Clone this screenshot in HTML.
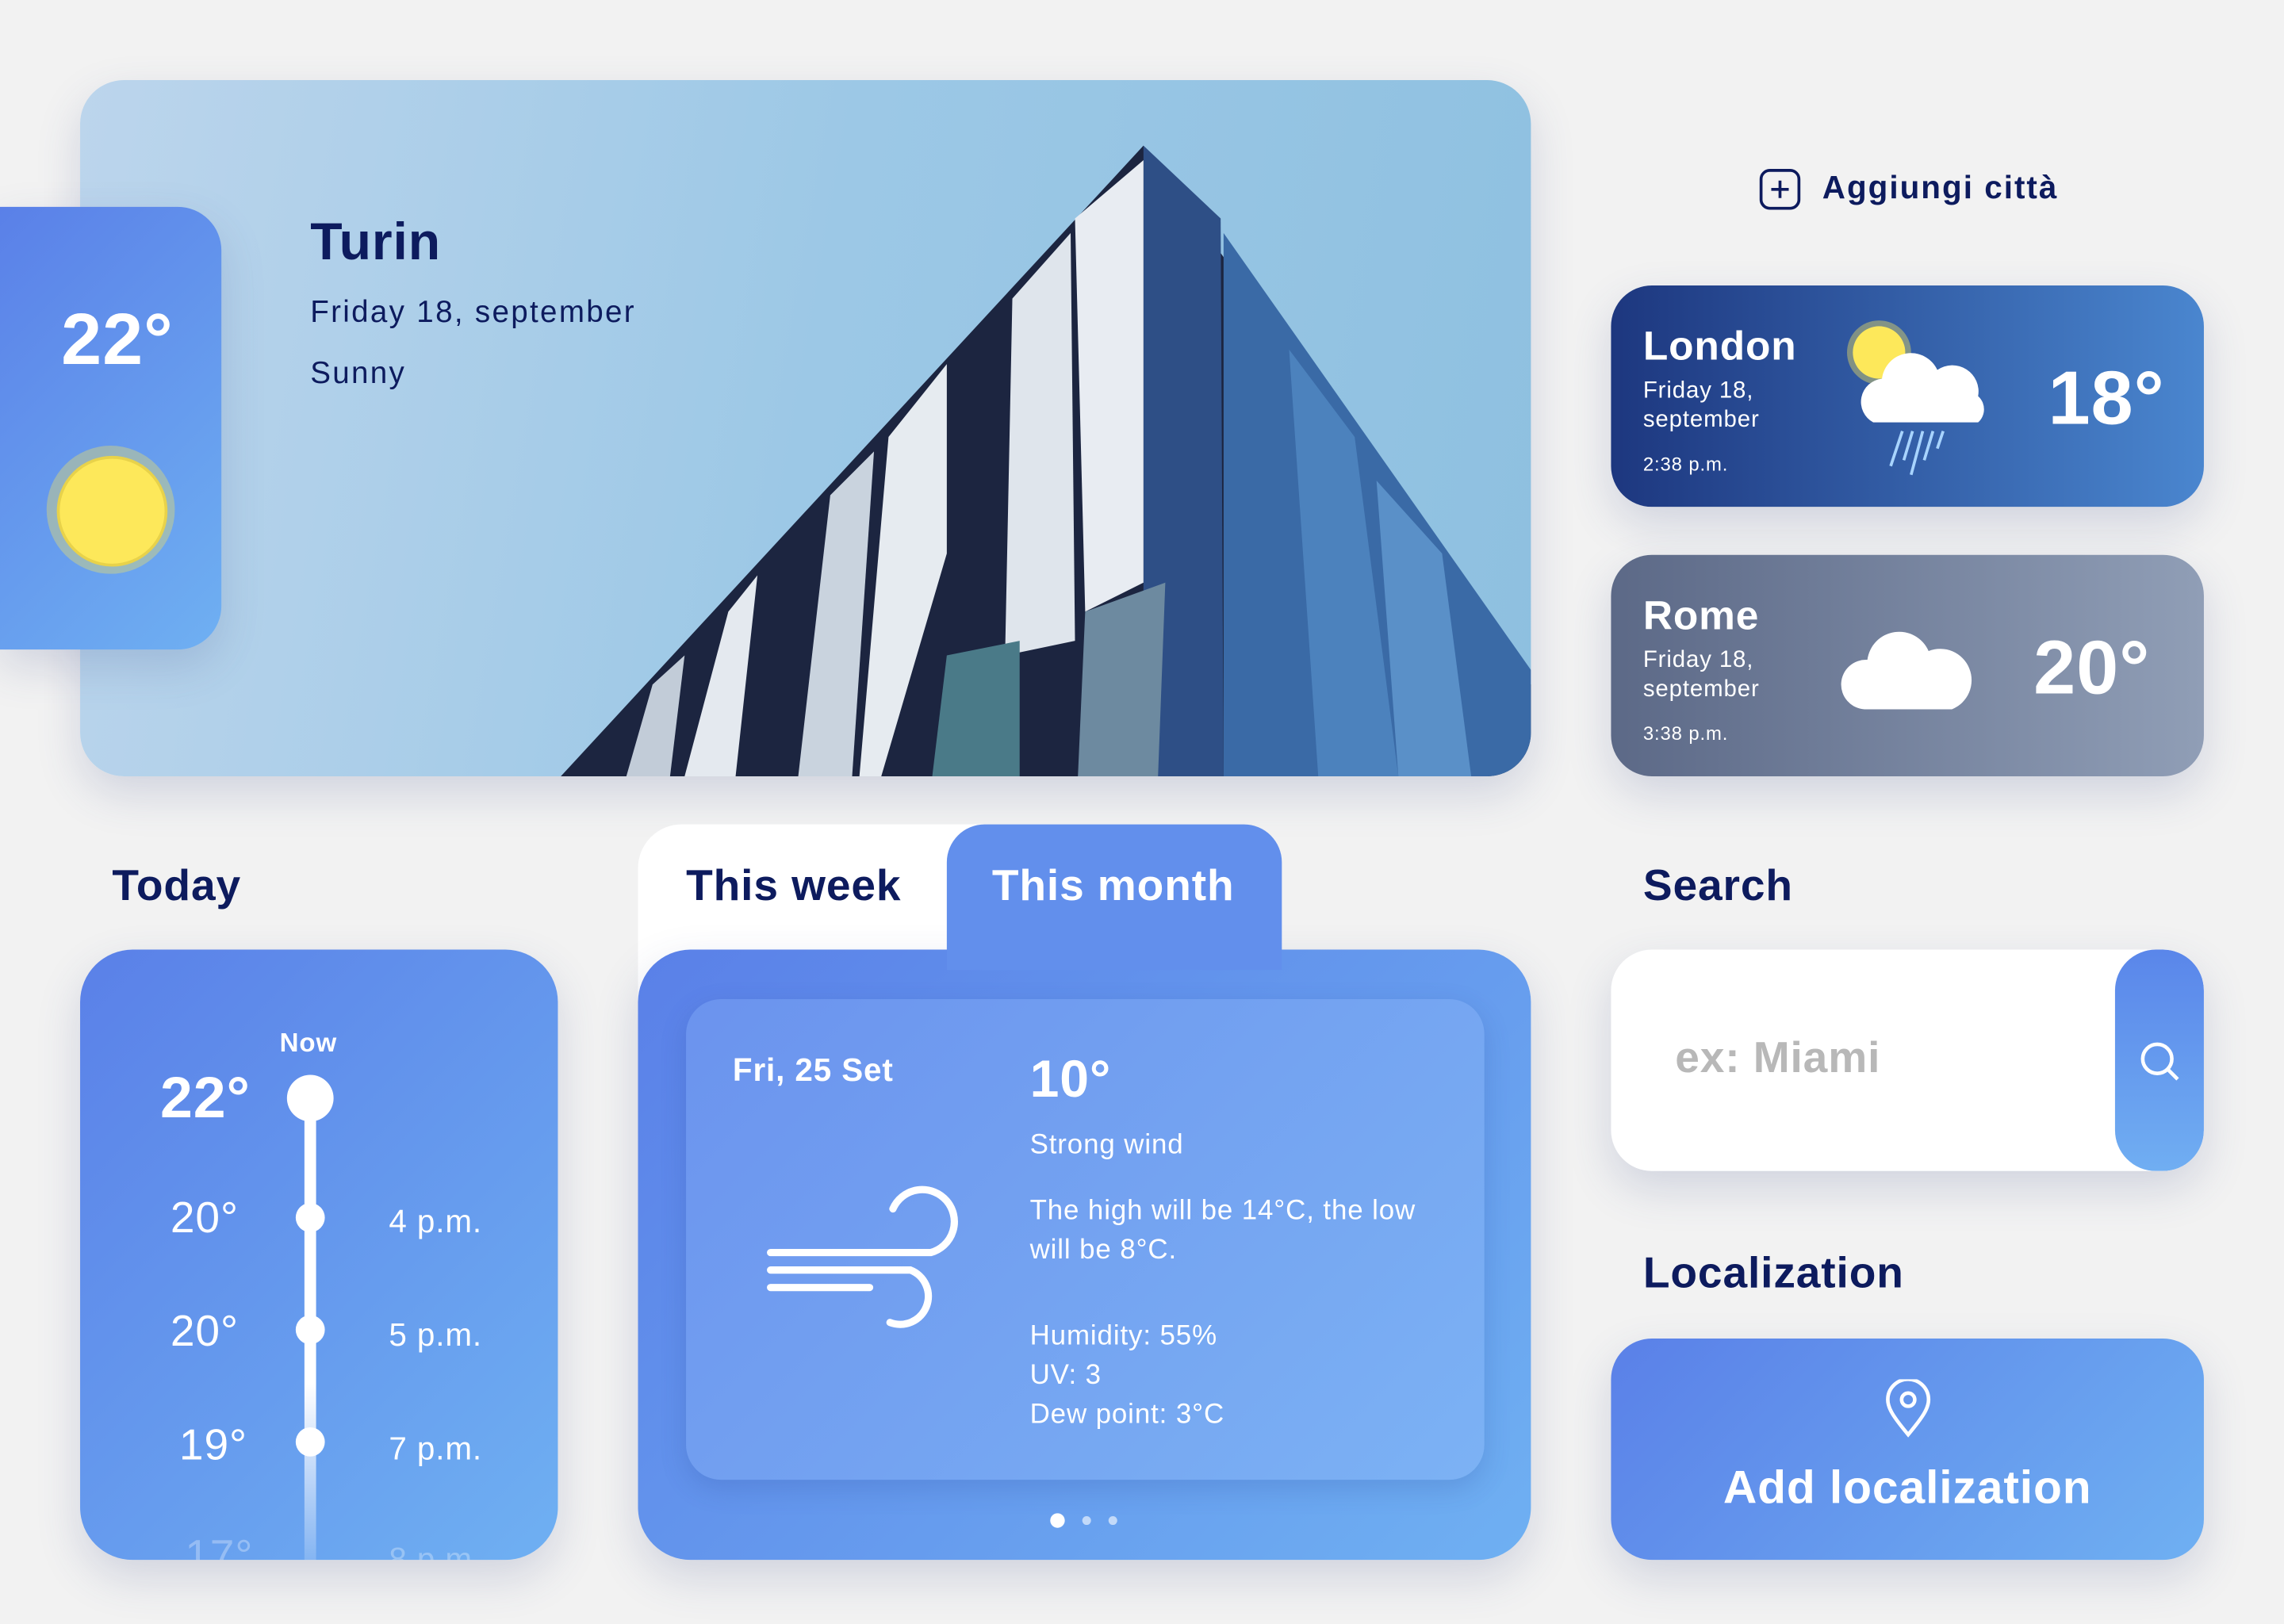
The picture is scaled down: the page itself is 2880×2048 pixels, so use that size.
<!DOCTYPE html>
<html><head><meta charset="utf-8"><style>
html,body{margin:0;padding:0;background:#f2f2f2;overflow:hidden}
body{width:2880px;height:2048px}
#w{position:absolute;left:0;top:0;width:1568px;height:1115px;transform:scale(1.83673);transform-origin:0 0;font-family:"Liberation Sans",sans-serif;color:#0d1b5e;letter-spacing:.03em}
.a{position:absolute}
.t{position:absolute;white-space:nowrap}
.sh{box-shadow:0 12px 30px rgba(60,80,140,.18)}
.g{background:linear-gradient(135deg,#5a80e8,#6fb0f2)}
</style></head><body><div id="w">
<div class="a sh" style="left:55px;top:55px;width:996px;height:478px;border-radius:30px;overflow:hidden;background:linear-gradient(100deg,#bcd5ec,#9cc8e6 50%,#8ec0e0)">
<svg class="a" style="left:0;top:0" width="996" height="478" viewBox="55 55 996 478">
<polygon points="785,100 385,533 1051,533 1051,470" fill="#1c2540"/>
<polygon points="785,100 838,150 840,533 785,533" fill="#2e4f86"/>
<polygon points="840,160 1051,460 1051,533 840,533" fill="#3a6aa6"/>
<polygon points="738,150 785,110 785,400 745,420" fill="#e8ecf2"/>
<polygon points="695,205 735,160 738,440 690,450" fill="#dfe5ec"/>
<polygon points="610,300 650,250 650,380 605,533 590,533" fill="#e6ebf0"/>
<polygon points="570,340 600,310 585,533 548,533" fill="#c9d3de"/>
<polygon points="500,420 520,395 505,533 470,533" fill="#e4e9ef"/>
<polygon points="448,470 470,450 460,533 430,533" fill="#c2ccd8"/>
<polygon points="885,240 930,300 960,533 905,533" fill="#4c82bd"/>
<polygon points="945,330 990,380 1010,533 960,533" fill="#5a90c8"/>
<polygon points="745,420 800,400 795,533 740,533" fill="#6d8aa0"/>
<polygon points="650,450 700,440 700,533 640,533" fill="#4a7a88"/>
</svg>
<div class="t" style="left:158px;top:90px;font-size:36px;font-weight:bold">Turin</div>
<div class="t" style="left:158px;top:148px;font-size:21px;letter-spacing:.06em">Friday 18, september</div>
<div class="t" style="left:158px;top:190px;font-size:21px;letter-spacing:.06em">Sunny</div>
</div>
<div class="a g sh" style="left:0;top:142px;width:152px;height:304px;border-radius:0 30px 30px 0">
<div class="t" style="left:42px;top:62px;font-size:50px;font-weight:bold;color:#fff">22°</div>
<div class="a" style="left:32px;top:164px;width:88px;height:88px;border-radius:50%;background:rgba(253,232,90,.35)"></div>
<div class="a" style="left:39px;top:171px;width:72px;height:72px;border-radius:50%;background:#fde85a;border:2px solid #e8d24a"></div>
</div>
<svg class="a" style="left:1207px;top:115px" width="30" height="30" viewBox="0 0 30 30"><rect x="2" y="2" width="26" height="26" rx="6" fill="none" stroke="#0d1b5e" stroke-width="2"/><path d="M15 9v12M9 15h12" stroke="#0d1b5e" stroke-width="2"/></svg>
<div class="t" style="left:1251px;top:116px;font-size:22px;font-weight:bold;letter-spacing:.05em">Aggiungi città</div>
<div class="a sh" style="left:1106px;top:196px;width:407px;height:152px;border-radius:28px;background:linear-gradient(90deg,#1d377f,#4a86cf);color:#fff">
<div class="t" style="left:22px;top:26px;font-size:28px;font-weight:bold">London</div>
<div class="t" style="left:22px;top:63px;font-size:16px;line-height:20px">Friday 18,<br>september</div>
<div class="t" style="left:22px;top:115px;font-size:13px">2:38 p.m.</div>
<svg class="a" style="left:160px;top:22px" width="100" height="112" viewBox="0 0 100 112"><circle cx="24" cy="24" r="22" fill="#fde85a" opacity=".4"/><circle cx="24" cy="24" r="18" fill="#fde85a"/><path d="M20 72a16 16 0 0 1 6-30a20 20 0 0 1 38-6a18 18 0 0 1 28 18a12 12 0 0 1 0 18z" fill="#fff"/><path d="M40 78l-8 24M47 78l-6 20M54 78l-8 30M61 78l-6 20M68 78l-4 12" stroke="#a8d4ff" stroke-width="2"/></svg>
<div class="t" style="left:300px;top:48px;font-size:52px;font-weight:bold">18°</div>
</div>
<div class="a sh" style="left:1106px;top:381px;width:407px;height:152px;border-radius:28px;background:linear-gradient(90deg,#5c6987,#909eb6);color:#fff">
<div class="t" style="left:22px;top:26px;font-size:28px;font-weight:bold">Rome</div>
<div class="t" style="left:22px;top:63px;font-size:16px;line-height:20px">Friday 18,<br>september</div>
<div class="t" style="left:22px;top:115px;font-size:13px">3:38 p.m.</div>
<svg class="a" style="left:156px;top:46px" width="96" height="62" viewBox="0 0 96 62"><path d="M18 60a17 17 0 0 1 2-34a22 22 0 0 1 42-6a19 19 0 0 1 16 40z" fill="#fff"/></svg>
<div class="t" style="left:290px;top:48px;font-size:52px;font-weight:bold">20°</div>
</div>
<div class="t" style="left:77px;top:592px;font-size:30px;font-weight:bold">Today</div>
<div class="a g sh" style="left:55px;top:652px;width:328px;height:419px;border-radius:36px;overflow:hidden;color:#fff">
<div class="t" style="left:137px;top:54px;font-size:18px;font-weight:bold">Now</div>
<div class="t" style="left:55px;top:80px;font-size:40px;font-weight:bold">22°</div>
<div class="a" style="left:154px;top:100px;width:8px;height:330px;background:linear-gradient(#fff 60%,rgba(255,255,255,.1))"></div>
<div class="a" style="left:142px;top:86px;width:32px;height:32px;border-radius:50%;background:#fff"></div>
<div class="a" style="left:148px;top:174px;width:20px;height:20px;border-radius:50%;background:#fff"></div>
<div class="a" style="left:148px;top:251px;width:20px;height:20px;border-radius:50%;background:#fff"></div>
<div class="a" style="left:148px;top:328px;width:20px;height:20px;border-radius:50%;background:#fff"></div>
<div class="t" style="left:62px;top:168px;font-size:30px">20°</div><div class="t" style="left:212px;top:174px;font-size:22px">4 p.m.</div>
<div class="t" style="left:62px;top:246px;font-size:30px">20°</div><div class="t" style="left:212px;top:252px;font-size:22px">5 p.m.</div>
<div class="t" style="left:68px;top:324px;font-size:30px">19°</div><div class="t" style="left:212px;top:330px;font-size:22px">7 p.m.</div>
<div class="t" style="left:72px;top:400px;font-size:30px;opacity:.3">17°</div><div class="t" style="left:212px;top:406px;font-size:22px;opacity:.3">8 p.m.</div>
</div>
<div class="a" style="left:438px;top:566px;width:240px;height:120px;border-radius:30px 0 0 0;background:#fff"></div>
<div class="t" style="left:471px;top:592px;font-size:30px;font-weight:bold">This week</div>
<div class="a sh" style="left:438px;top:652px;width:613px;height:419px;border-radius:36px;background:linear-gradient(135deg,#5a80e8,#6fb0f2)"></div>
<div class="a" style="left:650px;top:566px;width:230px;height:100px;border-radius:26px 26px 0 0;background:#628fec"></div>
<div class="t" style="left:681px;top:592px;font-size:30px;font-weight:bold;color:#fff">This month</div>
<div class="a" style="left:471px;top:686px;width:548px;height:330px;border-radius:24px;background:linear-gradient(135deg,#6b93ee,#7cb2f4);box-shadow:0 6px 18px rgba(40,70,150,.2);color:#fff">
<div class="t" style="left:32px;top:36px;font-size:22px;font-weight:bold">Fri, 25 Set</div>
<div class="t" style="left:236px;top:34px;font-size:36px;font-weight:bold">10°</div>
<div class="t" style="left:236px;top:90px;font-size:19px">Strong wind</div>
<div class="t" style="left:236px;top:132px;font-size:19px;line-height:27px">The high will be 14°C, the low<br>will be 8°C.</div>
<div class="t" style="left:236px;top:218px;font-size:19px;line-height:27px">Humidity: 55%<br>UV: 3<br>Dew point: 3°C</div>
<svg class="a" style="left:54px;top:126px" width="142" height="104" viewBox="0 0 142 104"><path d="M4 48h110a22 22 0 1 0-26-30M4 60h96a18 18 0 1 1-14 36M4 72h68" fill="none" stroke="#fff" stroke-width="5" stroke-linecap="round"/></svg>
</div>
<div class="a" style="left:721px;top:1039px;width:10px;height:10px;border-radius:50%;background:#fff"></div>
<div class="a" style="left:743px;top:1041px;width:6px;height:6px;border-radius:50%;background:rgba(255,255,255,.6)"></div>
<div class="a" style="left:761px;top:1041px;width:6px;height:6px;border-radius:50%;background:rgba(255,255,255,.6)"></div>
<div class="t" style="left:1128px;top:592px;font-size:30px;font-weight:bold">Search</div>
<div class="a sh" style="left:1106px;top:652px;width:407px;height:152px;border-radius:28px;background:#fff;overflow:hidden">
<div class="t" style="left:44px;top:58px;font-size:30px;font-weight:bold;color:#b8b8b8">ex: Miami</div>
<div class="a" style="left:346px;top:0;width:61px;height:152px;border-radius:28px;background:linear-gradient(#5a86ea,#70aef2)"></div>
<svg class="a" style="left:362px;top:62px" width="30" height="30" viewBox="0 0 30 30"><circle cx="13" cy="13" r="10" fill="none" stroke="#fff" stroke-width="2.5"/><path d="M20 20l7 7" stroke="#fff" stroke-width="2.5"/></svg>
</div>
<div class="t" style="left:1128px;top:858px;font-size:30px;font-weight:bold">Localization</div>
<div class="a g sh" style="left:1106px;top:919px;width:407px;height:152px;border-radius:28px;color:#fff">
<svg class="a" style="left:188px;top:28px" width="32" height="40" viewBox="0 0 32 40"><path d="M16 38C6 26 2 20 2 14a14 14 0 0 1 28 0c0 6-4 12-14 24z" fill="none" stroke="#fff" stroke-width="2.5"/><circle cx="16" cy="14" r="4.5" fill="none" stroke="#fff" stroke-width="2.5"/></svg>
<div class="t" style="left:0;width:407px;text-align:center;top:84px;font-size:32px;font-weight:bold">Add localization</div>
</div>
</div></body></html>
